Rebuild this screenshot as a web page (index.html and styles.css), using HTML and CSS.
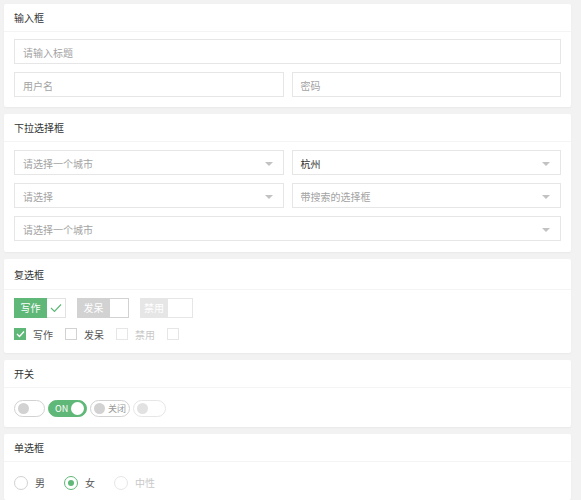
FILE: index.html
```html
<!DOCTYPE html>
<html lang="zh-CN">
<head>
    <meta charset="UTF-8">
    <meta name="viewport" content="width=device-width, initial-scale=1.0">
    <title>表单元素</title>
    <link rel="stylesheet" href="styles.css">
</head>
<body>
    <div class="page">
        <!-- 输入框 -->
        <div class="card">
            <div class="card-header">输入框</div>
            <div class="card-body">
                <div class="row">
                    <div class="field">请输入标题</div>
                </div>
                <div class="row">
                    <div class="field">用户名</div>
                    <div class="field">密码</div>
                </div>
            </div>
        </div>

        <!-- 下拉选择框 -->
        <div class="card">
            <div class="card-header">下拉选择框</div>
            <div class="card-body selects">
                <div class="row">
                    <div class="field select">请选择一个城市<i class="arrow"></i></div>
                    <div class="field select filled">杭州<i class="arrow"></i></div>
                </div>
                <div class="row">
                    <div class="field select">请选择<i class="arrow"></i></div>
                    <div class="field select">带搜索的选择框<i class="arrow"></i></div>
                </div>
                <div class="row">
                    <div class="field select">请选择一个城市<i class="arrow"></i></div>
                </div>
            </div>
        </div>

        <!-- 复选框 -->
        <div class="card">
            <div class="card-header tall">复选框</div>
            <div class="card-body checks">
                <div class="row tags">
                    <div class="tag-check checked">
                        <span>写作</span>
                        <i><svg width="12" height="10" viewBox="0 0 12 10"><path d="M1 5 L4.5 8.5 L11 1.5" fill="none" stroke="#5fb878" stroke-width="1.2"/></svg></i>
                    </div>
                    <div class="tag-check">
                        <span>发呆</span>
                        <i></i>
                    </div>
                    <div class="tag-check disabled">
                        <span>禁用</span>
                        <i></i>
                    </div>
                </div>
                <div class="row boxes">
                    <label class="box checked"><i><svg width="9" height="8" viewBox="0 0 9 8"><path d="M1 4 L3.5 6.5 L8 1.5" fill="none" stroke="#fff" stroke-width="1.3"/></svg></i>写作</label>
                    <label class="box"><i></i>发呆</label>
                    <label class="box disabled"><i></i>禁用</label>
                    <label class="box disabled"><i></i></label>
                </div>
            </div>
        </div>

        <!-- 开关 -->
        <div class="card">
            <div class="card-header">开关</div>
            <div class="card-body">
                <div class="row switches">
                    <div class="switch"><i></i></div>
                    <div class="switch on"><em>ON</em><i></i></div>
                    <div class="switch"><i></i><em>关闭</em></div>
                    <div class="switch disabled"><i></i></div>
                </div>
            </div>
        </div>

        <!-- 单选框 -->
        <div class="card">
            <div class="card-header">单选框</div>
            <div class="card-body">
                <div class="row radios">
                    <label class="radio"><i></i>男</label>
                    <label class="radio checked"><i></i>女</label>
                    <label class="radio disabled"><i></i>中性</label>
                </div>
            </div>
        </div>
    </div>
</body>
</html>
```

FILE: styles.css
```css
body {
    margin: 0;
    background-color: #f2f2f2;
    font-family: 'Noto Sans CJK SC', 'Noto Sans', sans-serif;
    font-size: 10px;
    color: #333;
}
.page {
    padding: 4px 10px 0 4px;
}
.card {
    background-color: #fff;
    border-radius: 2px;
    box-shadow: 0 1px 2px rgba(0, 0, 0, 0.04);
    margin-bottom: 7px;
}
.card-header {
    height: 27px;
    line-height: 27px;
    padding: 0 10px;
    border-bottom: 1px solid #f4f4f4;
    color: #333;
}
.card-header.tall {
    height: 30px;
    line-height: 31px;
}
.card-body {
    padding: 7px 10px 10px;
}
.card-body.selects {
    padding-top: 8px;
    padding-bottom: 11px;
}
.card-body.checks {
    padding-top: 8px;
    padding-bottom: 12px;
}
.row {
    display: flex;
    gap: 8px;
    margin-bottom: 8px;
}
.row:last-child {
    margin-bottom: 0;
}
.field {
    flex: 1;
    height: 25px;
    line-height: 25px;
    border: 1px solid #e6e6e6;
    box-sizing: border-box;
    padding: 0 8px;
    color: #a3a3a3;
    position: relative;
}
.field.filled {
    color: #333;
}
.arrow {
    position: absolute;
    right: 10px;
    top: 11px;
    width: 0;
    height: 0;
    border-left: 4px solid transparent;
    border-right: 4px solid transparent;
    border-top: 4px solid #c2c2c2;
}

/* checkbox */
.tags {
    gap: 11px;
}
.tag-check {
    display: flex;
    height: 20px;
}
.tag-check span {
    background-color: #d2d2d2;
    color: #fff;
    width: 33px;
    text-align: center;
    line-height: 20px;
}
.tag-check i {
    width: 19px;
    flex-shrink: 0;
    box-sizing: border-box;
    border: 1px solid #d2d2d2;
    border-left: none;
    display: flex;
    align-items: center;
    justify-content: center;
}
.tag-check.checked span {
    background-color: #5fb878;
}
.tag-check.checked i {
    border-color: #e2e2e2;
}
.tag-check.disabled span {
    background-color: #e6e6e6;
    width: 28px;
}
.tag-check.disabled i {
    border-color: #e6e6e6;
    width: 25px;
}
.boxes {
    gap: 0;
    align-items: center;
    height: 14px;
    margin-top: 9px;
}
.box {
    display: flex;
    align-items: center;
    margin-right: 12px;
    color: #555;
}
.box i {
    width: 12px;
    height: 12px;
    box-sizing: border-box;
    border: 1px solid #d2d2d2;
    margin-right: 7px;
    display: flex;
    align-items: center;
    justify-content: center;
}
.box.checked i {
    background-color: #5fb878;
    border-color: #5fb878;
}
.box.disabled {
    color: #c8c8c8;
}
.box.disabled i {
    border-color: #e6e6e6;
}

/* switch */
.switches {
    gap: 3px;
    padding-top: 5px;
}
.switch {
    height: 17px;
    min-width: 31px;
    box-sizing: border-box;
    border: 1px solid #d2d2d2;
    border-radius: 9px;
    display: flex;
    align-items: center;
    padding: 0 3px;
    gap: 3px;
}
.switch i {
    width: 11px;
    height: 11px;
    border-radius: 50%;
    background-color: #d2d2d2;
}
.switch em {
    font-style: normal;
    color: #999;
    font-size: 9px;
}
.switch.on {
    background-color: #5fb878;
    border-color: #5fb878;
    justify-content: space-between;
    width: 39px;
    padding: 0 2px 0 6px;
}
.switch.on i {
    background-color: #fff;
    width: 13px;
    height: 13px;
}
.switch.on em {
    color: #fff;
}
.switch.disabled {
    border-color: #e6e6e6;
    width: 33px;
}
.switch.disabled i {
    background-color: #e2e2e2;
}

/* radio */
.radios {
    padding-top: 6px;
}
.radio {
    display: flex;
    align-items: center;
    margin-right: 11px;
    color: #555;
}
.radio i {
    width: 14px;
    height: 14px;
    box-sizing: border-box;
    border: 1px solid #d2d2d2;
    border-radius: 50%;
    margin-right: 7px;
    display: flex;
    align-items: center;
    justify-content: center;
}
.radio.checked i {
    border-color: #5fb878;
}
.radio.checked i::after {
    content: '';
    width: 6px;
    height: 6px;
    border-radius: 50%;
    background-color: #5fb878;
}
.radio.disabled {
    color: #c8c8c8;
}
.radio.disabled i {
    border-color: #e6e6e6;
}
```
